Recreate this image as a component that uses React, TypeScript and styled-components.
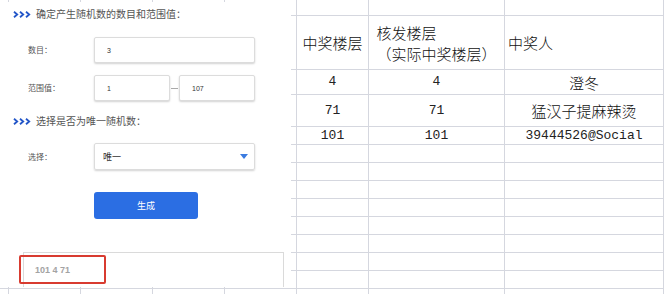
import React from 'react';
import styled, { createGlobalStyle } from 'styled-components';

const GlobalStyle = createGlobalStyle`
  html, body { margin: 0; padding: 0; background: #fff; }
  body {
    width: 664px; height: 294px; overflow: hidden;
    font-family: "Noto Sans CJK SC", "Liberation Sans", sans-serif;
  }
`;

const Page = styled.div`
  position: relative;
  width: 664px;
  height: 294px;
  overflow: hidden;
  background: #fff;
`;

/* ---------- spreadsheet ---------- */
const Sheet = styled.div`
  display: grid;
  grid-template-columns: 9px repeat(5, 72px) 136px 159px;
  grid-template-rows: 16px 54px 25px 32px repeat(10, 18px);
`;

const Cell = styled.div<{ $align?: 'left' | 'center' }>`
  box-sizing: border-box;
  border-right: 1px solid #d5d7df;
  border-bottom: 1px solid #d5d7df;
  display: flex;
  flex-direction: column;
  align-items: ${p => (p.$align === 'left' ? 'flex-start' : 'center')};
  justify-content: center;
  padding-left: ${p => (p.$align === 'left' ? '3px' : '0')};
  font-family: "Noto Sans CJK SC", sans-serif;
  font-size: 15px;
  font-weight: 300;
  line-height: 21px;
  color: #111;
  white-space: nowrap;
  overflow: hidden;
`;

const Ascii = styled.span`
  font-family: "Liberation Mono", "DejaVu Sans Mono", monospace;
  font-size: 13px;
  font-weight: 400;
  line-height: 18px;
  color: #222;
`;

/* ---------- floating form ---------- */
const FormPanel = styled.div`
  position: absolute;
  left: 0;
  top: 2px;
  width: 291px;
  height: 285px;
  box-sizing: border-box;
  padding-left: 13px;
  background: #fff;
  overflow: hidden;
  display: flex;
  flex-direction: column;
  align-items: flex-start;

  & > * { flex: none; }
`;

const SectionTitle = styled.div<{ $mt: number }>`
  margin-top: ${p => p.$mt}px;
  height: 14px;
  display: flex;
  align-items: center;
  gap: 5px;
  font-size: 10px;
  line-height: 14px;
  color: #555;
`;

const FieldRow = styled.div<{ $mt: number }>`
  margin-top: ${p => p.$mt}px;
  padding-left: 15px;
  display: flex;
  align-items: center;
`;

const Label = styled.label`
  width: 66px;
  font-size: 8px;
  color: #555;
  line-height: 12px;
`;

const TextInput = styled.input<{ $w: number }>`
  box-sizing: border-box;
  width: ${p => p.$w}px;
  height: 26px;
  margin: 0;
  padding: 0 0 0 12px;
  border: 1px solid #dcdcdc;
  border-radius: 2px;
  box-shadow: 0 1px 2px rgba(0, 0, 0, 0.18);
  background: #fff;
  font-family: "Liberation Sans", sans-serif;
  font-size: 7px;
  color: #333;
  outline: none;
`;

const Dash = styled.span`
  width: 7px;
  height: 1px;
  margin: 0 1px;
  background: #aaa;
`;

const Select = styled.div`
  box-sizing: border-box;
  width: 161px;
  height: 27px;
  padding: 0 6px 0 8px;
  border: 1px solid #dcdcdc;
  border-radius: 2px;
  box-shadow: 0 1px 2px rgba(0, 0, 0, 0.18);
  display: flex;
  align-items: center;
  justify-content: space-between;
  font-size: 9px;
  color: #333;
`;

const Caret = styled.span`
  width: 0;
  height: 0;
  border-left: 4px solid transparent;
  border-right: 4px solid transparent;
  border-top: 5px solid #3b7be0;
`;

const Button = styled.button`
  margin: 22px 0 0 81px;
  width: 104px;
  height: 27px;
  padding: 0;
  border: none;
  border-radius: 3px;
  background: #2b6ee3;
  color: #fff;
  font-family: "Noto Sans CJK SC", sans-serif;
  font-size: 9px;
`;

const ResultBox = styled.div`
  position: relative;
  margin: 33px 0 0 10px;
  width: 261px;
  height: 60px;
  box-sizing: border-box;
  border: 1px solid #dadada;
  padding: 11px 0 0 11px;
  font-family: "Liberation Sans", sans-serif;
  font-size: 9px;
  font-weight: 700;
  line-height: 12px;
  color: #a3a3a3;
`;

const Highlight = styled.div`
  position: absolute;
  left: -5px;
  top: 2px;
  width: 87px;
  height: 29px;
  box-sizing: border-box;
  border: 2px solid #d83b30;
  border-radius: 2px;
`;

const Chevrons = () => (
  <svg width="18" height="7" viewBox="0 0 18 7">
    <g fill="none" stroke="#2356c8" strokeWidth="1.8" strokeLinejoin="miter">
      <path d="M1 0.8 L4.2 3.5 L1 6.2" />
      <path d="M7 0.8 L10.2 3.5 L7 6.2" />
      <path d="M13 0.8 L16.2 3.5 L13 6.2" />
    </g>
  </svg>
);

type Row = (React.ReactNode | null)[];

const header: Row = [
  null, null, null, null, null,
  '中奖楼层',
  <>核发楼层<br />（实际中奖楼层）</>,
  '中奖人',
];

const data: [string, string, React.ReactNode][] = [
  ['4', '4', '澄冬'],
  ['71', '71', '猛汉子提麻辣烫'],
  ['101', '101', <Ascii key="e">39444526@Social</Ascii>],
];

export default function App() {
  const rows: Row[] = [];
  rows.push(new Array(8).fill(null));
  rows.push(header);
  data.forEach(([a, b, c]) => {
    rows.push([null, null, null, null, null, <Ascii>{a}</Ascii>, <Ascii>{b}</Ascii>, c]);
  });
  for (let i = 0; i < 9; i++) rows.push(new Array(8).fill(null));

  return (
    <Page>
      <GlobalStyle />
      <Sheet>
        {rows.map((r, ri) =>
          r.map((c, ci) => (
            <Cell key={`${ri}-${ci}`} $align={ri === 1 && ci === 7 ? 'left' : 'center'}>
              {c}
            </Cell>
          ))
        )}
      </Sheet>

      <FormPanel>
        <SectionTitle $mt={5}>
          <Chevrons />
          确定产生随机数的数目和范围值：
        </SectionTitle>
        <FieldRow $mt={16}>
          <Label>数目：</Label>
          <TextInput $w={161} readOnly value="3" />
        </FieldRow>
        <FieldRow $mt={12}>
          <Label>范围值：</Label>
          <TextInput $w={76} readOnly value="1" />
          <Dash />
          <TextInput $w={76} readOnly value="107" />
        </FieldRow>
        <SectionTitle $mt={13}>
          <Chevrons />
          选择是否为唯一随机数：
        </SectionTitle>
        <FieldRow $mt={15}>
          <Label>选择：</Label>
          <Select>
            <span>唯一</span>
            <Caret />
          </Select>
        </FieldRow>
        <Button>生成</Button>
        <ResultBox>
          101 4 71
          <Highlight />
        </ResultBox>
      </FormPanel>
    </Page>
  );
}
